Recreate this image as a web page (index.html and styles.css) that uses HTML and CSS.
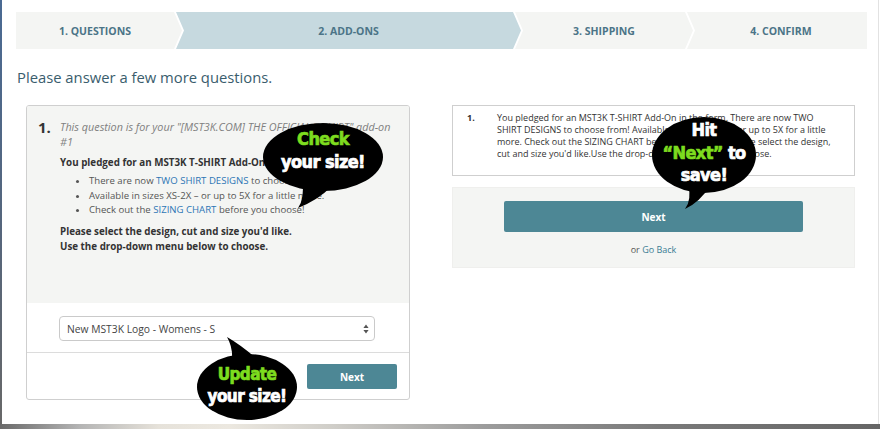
FILE: index.html
```html
<!DOCTYPE html>
<html lang="en">
<head>
<meta charset="utf-8">
<title>Add-ons</title>
<link rel="stylesheet" href="styles.css">
</head>
<body>
<div class="window">
  <nav class="steps">
    <div class="step step-first">1. QUESTIONS</div>
    <div class="step step-mid step-active">2. ADD-ONS</div>
    <div class="step step-mid">3. SHIPPING</div>
    <div class="step step-last">4. CONFIRM</div>
  </nav>

  <h1 class="heading">Please answer a few more questions.</h1>

  <div class="columns">
    <section class="card">
      <div class="q-body">
        <div class="q-num">1.</div>
        <div class="q-text">
          <p class="q-intro">This question is for your "[MST3K.COM] THE OFFICIAL T-SHIRT" add-on #1</p>
          <p class="q-strong q-pledge">You pledged for an MST3K T-SHIRT Add-On Item.</p>
          <ul class="q-list">
            <li>There are now <a class="link">TWO SHIRT DESIGNS</a> to choose from!</li>
            <li>Available in sizes XS-2X – or up to 5X for a little more.</li>
            <li>Check out the <a class="link">SIZING CHART</a> before you choose!</li>
          </ul>
          <p class="q-strong">Please select the design, cut and size you'd like.<br>Use the drop-down menu below to choose.</p>
        </div>
      </div>
      <div class="q-select-row">
        <div class="select">
          <span class="select-value">New MST3K Logo - Womens - S</span>
          <svg class="select-arrows" width="6" height="10" viewBox="0 0 6 10"><path d="M3 0.5 L5.6 4 H0.4 Z M3 9.5 L0.4 6 H5.6 Z" fill="#555"/></svg>
        </div>
      </div>
      <div class="q-footer">
        <button class="btn btn-small">Next</button>
      </div>
    </section>

    <section class="side">
      <div class="summary">
        <span class="s-num">1.</span>
        <p class="s-text">You pledged for an MST3K T-SHIRT Add-On in the form. There are now TWO SHIRT DESIGNS to choose from! Available in sizes XS-2X – or up to 5X for a little more. Check out the SIZING CHART before you choose! Please select the design, cut and size you'd like.Use the drop-down menu below to choose.</p>
      </div>
      <div class="actions">
        <button class="btn btn-wide">Next</button>
        <p class="back">or <a class="back-link">Go Back</a></p>
      </div>
    </section>
  </div>

  <div class="bubble bubble-check">
    <svg class="bubble-shape" width="124" height="92" viewBox="0 0 124 92">
      <ellipse cx="61" cy="37" rx="60" ry="34" fill="#000"/>
      <path d="M40 60 Q43 78 36 88 Q56 80 70 66 Z" fill="#000"/>
    </svg>
    <div class="bubble-text bt-check"><span class="green">Check</span><br>your size!</div>
  </div>

  <div class="bubble bubble-update">
    <svg class="bubble-shape" width="106" height="90" viewBox="0 0 106 90">
      <ellipse cx="52" cy="52" rx="50" ry="33" fill="#000"/>
      <path d="M37 26 Q38 12 32 2 Q46 10 62 24 Z" fill="#000"/>
    </svg>
    <div class="bubble-text bt-update"><span class="green">Update</span><br>your size!</div>
  </div>

  <div class="bubble bubble-next">
    <svg class="bubble-shape" width="110" height="98" viewBox="0 0 110 98">
      <ellipse cx="54" cy="41" rx="52" ry="38" fill="#000"/>
      <path d="M38 70 Q42 86 35 95 Q50 88 60 72 Z" fill="#000"/>
    </svg>
    <div class="bubble-text bt-next">Hit<br><span class="green">“Next”</span> to<br>save!</div>
  </div>
</div>
<div class="bottom-bar"></div>
</body>
</html>
```
FILE: styles.css
```css
html, body {
  margin: 0;
  padding: 0;
}
body {
  width: 880px;
  height: 429px;
  overflow: hidden;
  background: #fff;
  font-family: "Open Sans", "Liberation Sans", sans-serif;
  color: #333;
}
p, ul, h1 { margin: 0; }

.window {
  position: relative;
  height: 424px;
  box-sizing: border-box;
  padding: 12px 13px 0 16px;
  background:
    linear-gradient(#4a6a93, #56667c 55%, #686868) 0 0 / 2px 100% no-repeat,
    linear-gradient(#e2e2e2, #e2e2e2) calc(100% - 1px) 0 / 1px 100% no-repeat,
    #fff;
}

.bottom-bar {
  height: 5px;
  background: linear-gradient(90deg, #6a6a6a 0%, #b4b4b4 9%, #e6e2da 18%, #ece8e0 26%, #cfcdc8 38%, #9c9c9c 55%, #7a7a7a 75%, #666 100%);
}

/* Steps */
.steps {
  display: flex;
  height: 37px;
}
.step {
  display: flex;
  align-items: center;
  justify-content: center;
  box-sizing: border-box;
  font-size: 10.5px;
  font-weight: 700;
  color: #4b7487;
  background: #f4f5f3;
}
.step-first {
  width: 166px;
  padding-right: 8px;
  clip-path: polygon(0 0, calc(100% - 8px) 0, 100% 50%, calc(100% - 8px) 100%, 0 100%);
}
.step-mid {
  margin-left: -6px;
  padding: 0 8px;
  clip-path: polygon(0 0, calc(100% - 8px) 0, 100% 50%, calc(100% - 8px) 100%, 0 100%, 8px 50%);
}
.step-active {
  width: 345px;
  background: #c6d9df;
}
.step-mid:not(.step-active) { width: 178px; }
.step-last {
  width: 180px;
  margin-left: -6px;
  padding-left: 8px;
  clip-path: polygon(0 0, 100% 0, 100% 100%, 0 100%, 8px 50%);
}

/* Heading */
.heading {
  margin: 18px 0 0 1px;
  font-size: 14.8px;
  line-height: 20px;
  font-weight: 400;
  color: #3a5d6d;
}

/* Columns */
.columns {
  display: flex;
  align-items: flex-start;
  gap: 42px;
  margin: 18px 0 0 10px;
}

/* Left card */
.card {
  width: 384px;
  box-sizing: border-box;
  border: 1px solid #cfcfcf;
  border-radius: 3px;
  overflow: hidden;
  background: #fff;
}
.q-body {
  display: flex;
  background: #f4f5f3;
  padding: 14px 12px 49px 11px;
}
.q-num {
  width: 22px;
  flex: none;
  font-size: 15px;
  line-height: 14.5px;
  font-weight: 700;
  color: #333;
}
.q-text {
  flex: 1;
  font-size: 9.5px;
  line-height: 14.5px;
}
.q-intro {
  font-style: italic;
  font-size: 10.8px;
  color: #808080;
  margin-bottom: 7px;
}
.q-strong {
  font-weight: 700;
  font-size: 9.8px;
  color: #333;
}
.q-pledge { margin-bottom: 3.5px; }
.q-list {
  padding-left: 29px;
  margin-bottom: 7.5px;
  font-size: 9.6px;
  color: #555;
}
.link {
  color: #2d76b5;
  text-decoration: none;
}

.q-select-row {
  padding: 13px 0 11px 32px;
}
.select {
  display: flex;
  align-items: center;
  justify-content: space-between;
  width: 316px;
  height: 25px;
  box-sizing: border-box;
  padding: 0 5px 0 7px;
  border: 1px solid #cacaca;
  border-radius: 4px;
  background: #fff;
  font-size: 10.3px;
  color: #444;
}
.select-arrows { display: block; }

.q-footer {
  display: flex;
  justify-content: flex-end;
  border-top: 1px solid #dcdcdc;
  padding: 11px 12px 10px 0;
}

.btn {
  border: 0;
  margin: 0;
  background: #4d8795;
  color: #fff;
  font-family: "Open Sans", "Liberation Sans", sans-serif;
  font-weight: 700;
  font-size: 10px;
  border-radius: 2px;
  padding: 0;
}
.btn-small {
  width: 90px;
  height: 25px;
}

/* Right side */
.side {
  width: 403px;
}
.summary {
  display: flex;
  border: 1px solid #cfcfcf;
  padding: 6px 14px 15px 14px;
  font-size: 9px;
  line-height: 12px;
  color: #333;
}
.s-num {
  width: 30px;
  flex: none;
  font-weight: 700;
}
.s-text { flex: 1; }

.actions {
  margin-top: 11px;
  background: #f4f5f3;
  border: 1px solid #efefed;
  padding: 13px 51px 10px;
  text-align: center;
}
.btn-wide {
  display: block;
  width: 100%;
  height: 31px;
  font-size: 10px;
}
.back {
  margin-top: 11px;
  font-size: 9px;
  line-height: 14px;
  color: #555;
}
.back-link {
  color: #3a7d93;
  text-decoration: none;
}

/* Speech bubbles (overlay callouts) */
.bubble {
  position: absolute;
}
.bubble-shape {
  position: absolute;
  left: 0;
  top: 0;
}
.bubble-text {
  position: relative;
  text-align: center;
  font-family: "DejaVu Sans Condensed", "Liberation Sans Narrow", "Liberation Sans", sans-serif;
  font-weight: 700;
  color: #fff;
  -webkit-text-stroke: 0.7px currentColor;
  letter-spacing: -0.6px;
}
.green { color: #7ddc1f; }

.bubble-check {
  left: 262px;
  top: 120px;
  width: 124px;
  height: 92px;
}
.bt-check {
  width: 122px;
  padding-top: 7px;
  font-size: 18px;
  line-height: 23px;
}

.bubble-update {
  left: 195px;
  top: 335px;
  width: 106px;
  height: 90px;
}
.bt-update {
  width: 104px;
  padding-top: 28px;
  font-size: 17px;
  line-height: 22px;
}

.bubble-next {
  left: 650px;
  top: 114px;
  width: 110px;
  height: 98px;
}
.bt-next {
  width: 108px;
  padding-top: 5px;
  font-size: 18px;
  line-height: 22.5px;
}
```
